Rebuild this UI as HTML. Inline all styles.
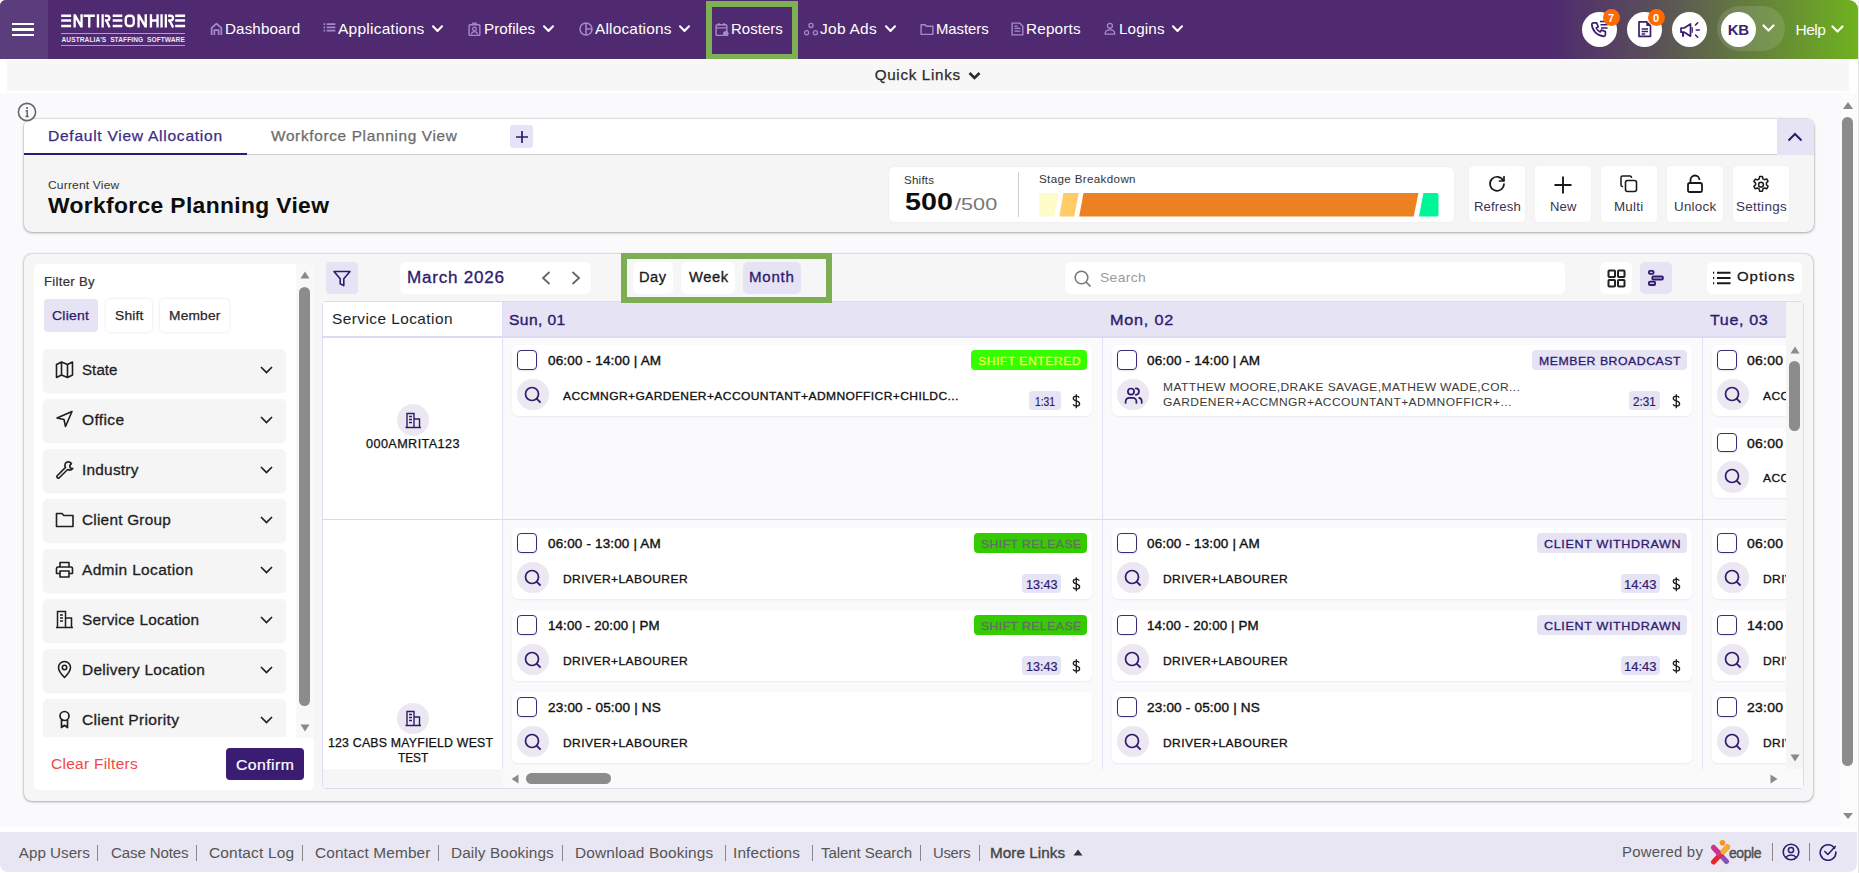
<!DOCTYPE html>
<html><head><meta charset="utf-8"><style>
*{margin:0;padding:0;box-sizing:border-box}
html,body{width:1859px;height:873px;overflow:hidden;background:#fff;font-family:"Liberation Sans",sans-serif}
.a{position:absolute}
.t{position:absolute;line-height:1;white-space:nowrap}
</style></head><body>
<div class="a" style="left:0px;top:0px;width:1858px;height:59px;background:linear-gradient(90deg,#4f2a70 0,#4f2a70 1550px,#5a5058 1655px,#6fb21f 1858px);border-top-right-radius:9px;border-top-left-radius:6px"></div>
<div class="a" style="left:0px;top:0px;width:48px;height:59px;background:#5b3c7c;border-top-left-radius:6px"></div>
<div class="a" style="left:12px;top:22.7px;width:22px;height:2.5px;background:#fff"></div>
<div class="a" style="left:12px;top:28.2px;width:22px;height:2.5px;background:#fff"></div>
<div class="a" style="left:12px;top:33.8px;width:22px;height:2.5px;background:#fff"></div>
<svg class="a" style="left:61px;top:14px;" width="126" height="14" viewBox="0 0 126 14" fill="none"><g stroke="#fff" stroke-width="2.35" fill="none"><path d="M0.2 1.7H10.1M0.2 6.45H10.1M0.2 12H10.1M13.65 13.4V0.3M20.55 13.4V0.3M13.65 0.6L20.55 13.1M22.6 1.7H33.9M28.25 1.7V13.4M36.95 0.3V13.4M41.65 0.3V13.4M43.90 1.7H46.00A2.375 2.375 0 0 1 46.00 6.45H43.90M45.50 6.45L48.55 13.4M51.7 1.7H61.3M51.7 6.45H61.3M51.7 12H61.3M89.95 0.3V13.4M96.55 0.3V13.4M89.95 6.45H96.55M77.55 13.4V0.3M84.75 13.4V0.3M77.55 0.6L84.75 13.1M100.55 0.3V13.4M104.85 0.3V13.4M107.10 1.7H109.60A2.375 2.375 0 0 1 109.60 6.45H107.10M108.70 6.45L112.15 13.4M114.2 1.7H124.1M114.2 6.45H124.1M114.2 12H124.1"/><rect x="64.75" y="1.7" width="8.00" height="10.3" rx="3"/></g></svg>
<div class="a" style="left:61px;top:33px;width:124px;height:1px;background:rgba(255,255,255,.55)"></div>
<div class="a" style="left:61px;top:45px;width:124px;height:1px;background:rgba(255,255,255,.55)"></div>
<div class="t " style="left:61.5px;top:36.6px;font-size:6.6px;color:#ece6f2;font-weight:bold;letter-spacing:0.07px;white-space:pre;">AUSTRALIA'S  STAFFING  SOFTWARE</div>
<svg class="a" style="left:210px;top:22px;" width="14" height="14" viewBox="0 0 13 13" fill="none"><path d="M1.5 12V5.5L6 1.5l4.5 4V12M4 12V7.5h4V12" stroke="#a58bc9" stroke-width="1.6" stroke-linejoin="round"/></svg>
<div class="t " style="left:225.2px;top:21.2px;font-size:15px;color:#fff;letter-spacing:0.11px;transform:scaleX(1.013);transform-origin:0 0;">Dashboard</div>
<svg class="a" style="left:322.7px;top:22px;" width="14" height="14" viewBox="0 0 13 13" fill="none"><path d="M0.5 2h1.5M0.5 5h1.5M0.5 8h1.5M3.5 2h8M3.5 5h8M3.5 8h8" stroke="#a58bc9" stroke-width="1.6"/></svg>
<div class="t " style="left:338.2px;top:21.2px;font-size:15px;color:#fff;letter-spacing:0.24px;transform:scaleX(1.034);transform-origin:0 0;">Applications</div>
<svg class="a" style="left:431.5px;top:25px;" width="11" height="8" viewBox="0 0 11 8" fill="none"><path d="M1 1.2l4.5 4.8L10 1.2" stroke="#fff" stroke-width="2" stroke-linecap="round" stroke-linejoin="round"/></svg>
<svg class="a" style="left:468.4px;top:22px;" width="14" height="14" viewBox="0 0 13 13" fill="none"><rect x="1" y="2.5" width="10" height="10" rx="1" stroke="#a58bc9" stroke-width="1.3"/><circle cx="6" cy="6.5" r="1.7" stroke="#a58bc9" stroke-width="1.2"/><path d="M3 11.5c.6-1.8 1.7-2.5 3-2.5s2.4.7 3 2.5M4.5 2.5V1h3v1.5" stroke="#a58bc9" stroke-width="1.2"/></svg>
<div class="t " style="left:484.0px;top:21.2px;font-size:15px;color:#fff;letter-spacing:0.08px;transform:scaleX(1.011);transform-origin:0 0;">Profiles</div>
<svg class="a" style="left:542.5px;top:25px;" width="11" height="8" viewBox="0 0 11 8" fill="none"><path d="M1 1.2l4.5 4.8L10 1.2" stroke="#fff" stroke-width="2" stroke-linecap="round" stroke-linejoin="round"/></svg>
<svg class="a" style="left:578.6px;top:22px;" width="14" height="14" viewBox="0 0 13 13" fill="none"><circle cx="6.5" cy="6.5" r="5.6" stroke="#a58bc9" stroke-width="1.4"/><path d="M6.5 1v11.2M6.5 6.5h5.6" stroke="#a58bc9" stroke-width="1.4"/></svg>
<div class="t " style="left:595.0px;top:21.2px;font-size:15px;color:#fff;letter-spacing:0.19px;transform:scaleX(1.027);transform-origin:0 0;">Allocations</div>
<svg class="a" style="left:679px;top:25px;" width="11" height="8" viewBox="0 0 11 8" fill="none"><path d="M1 1.2l4.5 4.8L10 1.2" stroke="#fff" stroke-width="2" stroke-linecap="round" stroke-linejoin="round"/></svg>
<svg class="a" style="left:715.4px;top:22px;" width="14" height="14" viewBox="0 0 13 13" fill="none"><rect x="1" y="2.5" width="10" height="10" rx="1.2" stroke="#a58bc9" stroke-width="1.3"/><path d="M1 5.5h10M3.5 1v2.5M8.5 1v2.5" stroke="#a58bc9" stroke-width="1.3"/><circle cx="10" cy="11" r="2.6" fill="#a58bc9"/></svg>
<div class="t " style="left:731.0px;top:21.2px;font-size:15px;color:#fff;letter-spacing:0.01px;">Rosters</div>
<svg class="a" style="left:804px;top:22px;" width="14" height="14" viewBox="0 0 13 13" fill="none"><circle cx="6.5" cy="3.2" r="1.9" stroke="#a58bc9" stroke-width="1.2"/><circle cx="2.4" cy="10" r="1.9" stroke="#a58bc9" stroke-width="1.2"/><circle cx="10.6" cy="10" r="1.9" stroke="#a58bc9" stroke-width="1.2"/></svg>
<div class="t " style="left:820.3px;top:21.2px;font-size:15px;color:#fff;letter-spacing:0.27px;transform:scaleX(1.031);transform-origin:0 0;">Job Ads</div>
<svg class="a" style="left:884.6px;top:25px;" width="11" height="8" viewBox="0 0 11 8" fill="none"><path d="M1 1.2l4.5 4.8L10 1.2" stroke="#fff" stroke-width="2" stroke-linecap="round" stroke-linejoin="round"/></svg>
<svg class="a" style="left:920px;top:22px;" width="14" height="14" viewBox="0 0 13 13" fill="none"><path d="M1 2.5h3.8l1.2 1.5h6v7.5H1z" stroke="#a58bc9" stroke-width="1.3" stroke-linejoin="round"/></svg>
<div class="t " style="left:936.4px;top:21.2px;font-size:15px;color:#fff;letter-spacing:-0.06px;transform:scaleX(0.993);transform-origin:0 0;">Masters</div>
<svg class="a" style="left:1011px;top:22px;" width="14" height="14" viewBox="0 0 13 13" fill="none"><path d="M1 1h7l3 3v8H1z" stroke="#a58bc9" stroke-width="1.3" stroke-linejoin="round"/><path d="M3.2 6h5.5M3.2 8.5h5.5M3.2 3.8h3" stroke="#a58bc9" stroke-width="1.2"/></svg>
<div class="t " style="left:1026.4px;top:21.2px;font-size:15px;color:#fff;letter-spacing:0.17px;transform:scaleX(1.020);transform-origin:0 0;">Reports</div>
<svg class="a" style="left:1104px;top:22px;" width="14" height="14" viewBox="0 0 13 13" fill="none"><circle cx="5.5" cy="3.5" r="2.3" stroke="#a58bc9" stroke-width="1.2"/><path d="M1 11.2c0-2.5 2-3.8 4.5-3.8s4.5 1.3 4.5 3.8z" stroke="#a58bc9" stroke-width="1.2" stroke-linejoin="round"/></svg>
<div class="t " style="left:1118.7px;top:21.2px;font-size:15px;color:#fff;letter-spacing:0.13px;transform:scaleX(1.015);transform-origin:0 0;">Logins</div>
<svg class="a" style="left:1171.6px;top:25px;" width="11" height="8" viewBox="0 0 11 8" fill="none"><path d="M1 1.2l4.5 4.8L10 1.2" stroke="#fff" stroke-width="2" stroke-linecap="round" stroke-linejoin="round"/></svg>
<div class="a" style="left:706px;top:1px;width:92px;height:59px;border:6px solid #7eb054"></div>
<div class="a" style="left:1582.0px;top:11.5px;width:35.0px;height:35.0px;background:#fff;border-radius:50%"></div>
<div class="a" style="left:1626.8px;top:11.5px;width:35.0px;height:35.0px;background:#fff;border-radius:50%"></div>
<div class="a" style="left:1671.9px;top:11.5px;width:35.0px;height:35.0px;background:#fff;border-radius:50%"></div>
<svg class="a" style="left:1587px;top:17px;" width="24" height="24" viewBox="0 0 24 24" fill="none"><g transform="translate(2.4 2.6) scale(.8)"><path d="M5 4h4l2 5l-2.5 1.5a11 11 0 0 0 5 5l1.5-2.5l5 2v4a2 2 0 0 1-2 2a16 16 0 0 1-15-15a2 2 0 0 1 2-2" stroke="#3a1d6e" stroke-width="2.1" stroke-linejoin="round"/></g><path d="M13 4.5h7.5M13.5 7.8h7M14 11h6.5" stroke="#3a1d6e" stroke-width="1.6"/></svg>
<svg class="a" style="left:1635px;top:19px;" width="20" height="20" viewBox="0 0 20 20" fill="none"><path d="M4 2.8h7.5l4 4v10.5H4z" stroke="#3a1d6e" stroke-width="1.7" stroke-linejoin="round"/><path d="M11.3 2.8v4.2h4.2z" fill="#3a1d6e"/><path d="M6.6 10.1h6.4M6.6 12.5h6.4M6.6 14.9h3.6" stroke="#3a1d6e" stroke-width="1.5"/></svg>
<svg class="a" style="left:1679px;top:19px;" width="22" height="20" viewBox="0 0 22 20" fill="none"><path d="M2 9h3.2l6.3-4v12.2L5.2 13.2H2z" stroke="#3a1d6e" stroke-width="1.7" stroke-linejoin="round"/><path d="M4 13.5v4.2" stroke="#3a1d6e" stroke-width="2"/><path d="M13.2 8.3v5.5" stroke="#3a1d6e" stroke-width="1.3"/><path d="M16.5 6l2.2-2.2M17.3 11h3M16.5 16l2.2 2.2" stroke="#3a1d6e" stroke-width="1.6" stroke-linecap="round"/></svg>
<div class="a" style="left:1603.0px;top:9px;width:17.0px;height:17px;background:#ff6a00;border-radius:50%"></div>
<div class="t " style="left:1607.9px;top:12.7px;font-size:11px;color:#fff;font-weight:bold;">7</div>
<div class="a" style="left:1648.0px;top:9px;width:17.0px;height:17px;background:#ff6a00;border-radius:50%"></div>
<div class="t " style="left:1652.9px;top:12.7px;font-size:11px;color:#fff;font-weight:bold;">0</div>
<div class="a" style="left:1717px;top:6px;width:68px;height:45px;background:rgba(255,255,255,.12);border-radius:23px"></div>
<div class="a" style="left:1721px;top:11.5px;width:35px;height:35.0px;background:#fff;border-radius:50%"></div>
<div class="t " style="left:1727.7px;top:22.2px;font-size:15px;color:#3b2470;font-weight:bold;letter-spacing:-0.18px;">KB</div>
<svg class="a" style="left:1762px;top:24px;" width="13" height="9" viewBox="0 0 13 9" fill="none"><path d="M1.5 1.5l5 5 5-5" stroke="#fff" stroke-width="2.2" stroke-linecap="round" stroke-linejoin="round"/></svg>
<div class="t " style="left:1795.5px;top:22.3px;font-size:15.5px;color:#fff;letter-spacing:-0.52px;font-family:'Liberation Sans';">Help</div>
<svg class="a" style="left:1831px;top:25px;" width="13" height="9" viewBox="0 0 13 9" fill="none"><path d="M1.5 1.5l5 5 5-5" stroke="#fff" stroke-width="2.2" stroke-linecap="round" stroke-linejoin="round"/></svg>
<div class="a" style="left:1841px;top:59px;width:18px;height:814px;background:#fcfcfc"></div>
<div class="a" style="left:1858px;top:0px;width:1px;height:873px;background:#e4e4e4"></div>
<div class="a" style="left:0px;top:59px;width:1858px;height:34px;background:#fff"></div>
<div class="a" style="left:7px;top:59.8px;width:1842px;height:31.0px;background:#f7f7f7"></div>
<div class="t " style="left:874.7px;top:66.9px;font-size:15.2px;color:#2a2a2a;letter-spacing:0.69px;-webkit-text-stroke:.25px #2a2a2a;">Quick Links</div>
<svg class="a" style="left:968px;top:71px;" width="13" height="10" viewBox="0 0 13 10" fill="none"><path d="M1.5 2l5 5 5-5" stroke="#2a2a2a" stroke-width="2.6" stroke-linejoin="miter"/></svg>
<div class="a" style="left:0px;top:93px;width:1841px;height:734px;background:#fafafc"></div>
<svg class="a" style="left:1842px;top:101px;" width="12" height="9" viewBox="0 0 12 9" fill="none"><path d="M1 8h10L6 1z" fill="#8a8a8a"/></svg>
<div class="a" style="left:1842px;top:117px;width:11px;height:649px;background:#8c8c8c;border-radius:6px"></div>
<svg class="a" style="left:1842px;top:812px;" width="12" height="8" viewBox="0 0 12 8" fill="none"><path d="M1 1h10L6 7z" fill="#8a8a8a"/></svg>
<div class="a" style="left:23.5px;top:118.5px;width:1790.0px;height:113.5px;background:#f5f5f5;border-radius:8px;box-shadow:0 0 2px rgba(0,0,0,.3),0 1px 3px rgba(0,0,0,.25)"></div>
<div class="a" style="left:23.5px;top:118.5px;width:1790.0px;height:36.5px;background:#fff;border-top-left-radius:8px;border-top-right-radius:8px;border-bottom:1px solid #cfcfcf"></div>
<div class="a" style="left:23.5px;top:153px;width:223.0px;height:2px;background:#2d1b6b"></div>
<div class="t " style="left:48.2px;top:128.7px;font-size:14.5px;color:#3d2b85;letter-spacing:0.68px;transform:scaleX(1.073);transform-origin:0 0;-webkit-text-stroke:.25px #3d2b85;">Default View Allocation</div>
<div class="t " style="left:271.2px;top:128.7px;font-size:14.5px;color:#6b6b6b;letter-spacing:0.63px;transform:scaleX(1.060);transform-origin:0 0;-webkit-text-stroke:.25px #6b6b6b;">Workforce Planning View</div>
<div class="a" style="left:510.3px;top:125px;width:23.19999999999999px;height:23.30000000000001px;background:#e6e3f7;border-radius:3px"></div>
<svg class="a" style="left:515px;top:130px;" width="14" height="14" viewBox="0 0 14 14" fill="none"><path d="M7 1v12M1 7h12" stroke="#2d1b6b" stroke-width="1.7"/></svg>
<div class="a" style="left:1777px;top:119px;width:36.5px;height:36px;background:#e6e3f5;border-top-right-radius:8px"></div>
<svg class="a" style="left:1787px;top:131px;" width="16" height="12" viewBox="0 0 16 12" fill="none"><path d="M1.5 9.5L8 3l6.5 6.5" stroke="#2d1b6b" stroke-width="2"/></svg>
<div class="t " style="left:48.2px;top:179.4px;font-size:11.7px;color:#333;letter-spacing:0.17px;transform:scaleX(1.029);transform-origin:0 0;">Current View</div>
<div class="t " style="left:48.2px;top:195.1px;font-size:22.2px;color:#0d0d0d;font-weight:bold;letter-spacing:0.34px;transform:scaleX(1.029);transform-origin:0 0;">Workforce Planning View</div>
<div class="a" style="left:889px;top:167px;width:565px;height:55px;background:#fff;border-radius:5px;box-shadow:0 0 2px rgba(0,0,0,.08)"></div>
<div class="t " style="left:904.3px;top:175.4px;font-size:11.2px;color:#333;letter-spacing:0.20px;transform:scaleX(1.038);transform-origin:0 0;">Shifts</div>
<div class="t " style="left:904.9px;top:190.4px;font-size:24.3px;color:#0d0d0d;font-weight:bold;transform:scaleX(1.180);transform-origin:0 0;">500</div>
<div class="t " style="left:955.0px;top:196.3px;font-size:17.4px;color:#777;transform:scaleX(1.247);transform-origin:0 0;">/500</div>
<div class="a" style="left:1018px;top:171.8px;width:1px;height:45.0px;background:#d0d0d0"></div>
<div class="t " style="left:1039.2px;top:173.7px;font-size:11px;color:#333;letter-spacing:0.33px;transform:scaleX(1.056);transform-origin:0 0;">Stage Breakdown</div>
<svg class="a" style="left:1038px;top:192px;" width="402" height="26" viewBox="0 0 402 26" fill="none"><path d="M3.2 1H20.7L16.6 24.6H3.2a2 2 0 0 1-2-2V3a2 2 0 0 1 2-2z" fill="#fffccb"/><path d="M25.4 1H40.8L36.2 24.6H21.3z" fill="#ffcc66"/><path d="M45.5 1H380.5L375.7 24.6H41.2z" fill="#ec8122"/><path d="M385.4 1H398.5a2 2 0 0 1 2 2V22.6a2 2 0 0 1-2 2H381z" fill="#00f598"/></svg>
<div class="a" style="left:1469px;top:166px;width:56px;height:56px;background:#fff;border-radius:4px;box-shadow:0 0 2px rgba(0,0,0,.06)"></div>
<div class="t " style="left:1473.6px;top:200.5px;font-size:12.9px;color:#3a3450;letter-spacing:0.14px;transform:scaleX(1.018);transform-origin:0 0;">Refresh</div>
<div class="a" style="left:1535px;top:166px;width:56px;height:56px;background:#fff;border-radius:4px;box-shadow:0 0 2px rgba(0,0,0,.06)"></div>
<div class="t " style="left:1549.8px;top:200.5px;font-size:12.9px;color:#3a3450;letter-spacing:0.13px;transform:scaleX(1.010);transform-origin:0 0;">New</div>
<div class="a" style="left:1601px;top:166px;width:56px;height:56px;background:#fff;border-radius:4px;box-shadow:0 0 2px rgba(0,0,0,.06)"></div>
<div class="t " style="left:1614.4px;top:200.5px;font-size:12.9px;color:#3a3450;letter-spacing:0.24px;transform:scaleX(1.036);transform-origin:0 0;">Multi</div>
<div class="a" style="left:1667px;top:166px;width:56px;height:56px;background:#fff;border-radius:4px;box-shadow:0 0 2px rgba(0,0,0,.06)"></div>
<div class="t " style="left:1673.9px;top:200.5px;font-size:12.9px;color:#3a3450;letter-spacing:0.26px;transform:scaleX(1.035);transform-origin:0 0;">Unlock</div>
<div class="a" style="left:1733px;top:166px;width:56px;height:56px;background:#fff;border-radius:4px;box-shadow:0 0 2px rgba(0,0,0,.06)"></div>
<div class="t " style="left:1735.7px;top:200.5px;font-size:12.9px;color:#3a3450;letter-spacing:0.28px;transform:scaleX(1.044);transform-origin:0 0;">Settings</div>
<svg class="a" style="left:1487px;top:174px;" width="20" height="20" viewBox="0 0 20 20" fill="none"><path d="M16.2 6.5A7 7 0 1 0 17 10" stroke="#1a1a1a" stroke-width="1.7" stroke-linecap="round"/><path d="M17 2.5v4.5h-4.5" stroke="#1a1a1a" stroke-width="1.7" stroke-linecap="round" stroke-linejoin="round"/></svg>
<svg class="a" style="left:1553px;top:175px;" width="20" height="20" viewBox="0 0 20 20" fill="none"><path d="M10 1.5v17M1.5 10h17" stroke="#1a1a1a" stroke-width="1.9"/></svg>
<svg class="a" style="left:1619px;top:174px;" width="20" height="20" viewBox="0 0 20 20" fill="none"><path d="M4 12.5H3.5a1.5 1.5 0 0 1-1.5-1.5V3.5A1.5 1.5 0 0 1 3.5 2H11a1.5 1.5 0 0 1 1.5 1.5V4" stroke="#1a1a1a" stroke-width="1.5"/><rect x="6.5" y="6.5" width="11" height="11" rx="2" stroke="#1a1a1a" stroke-width="1.6"/></svg>
<svg class="a" style="left:1685px;top:174px;" width="20" height="20" viewBox="0 0 20 20" fill="none"><path d="M5.5 9V6a4.5 4.5 0 0 1 9 0" stroke="#1a1a1a" stroke-width="1.8"/><rect x="3" y="9" width="14" height="9" rx="1.8" stroke="#1a1a1a" stroke-width="1.8"/></svg>
<svg class="a" style="left:1751px;top:175px;" width="20" height="20" viewBox="0 0 20 20" fill="none"><path d="M8.6 1.5h2.8l.5 2.3 1.6.9 2.2-.8 1.4 2.4-1.7 1.6v1.9l1.7 1.6-1.4 2.4-2.2-.8-1.6.9-.5 2.3H8.6l-.5-2.3-1.6-.9-2.2.8-1.4-2.4 1.7-1.6V8.1L2.9 6.5l1.4-2.4 2.2.8 1.6-.9z" stroke="#1a1a1a" stroke-width="1.5" stroke-linejoin="round"/><circle cx="10" cy="9.7" r="2.4" stroke="#1a1a1a" stroke-width="1.5"/></svg>
<svg class="a" style="left:17px;top:102px;" width="20" height="20" viewBox="0 0 20 20" fill="none"><circle cx="10" cy="10" r="8.6" fill="#fafafc" stroke="#666" stroke-width="1.6"/><path d="M8.6 8.8h1.6v5.6M8.4 14.5h3.4" stroke="#666" stroke-width="1.5"/><circle cx="10" cy="6" r="1.1" fill="#666"/></svg>
<div class="a" style="left:23.5px;top:253.5px;width:1789.8px;height:547.0px;background:#f6f6f6;border-radius:8px;box-shadow:0 0 2px rgba(0,0,0,.3),0 1px 3px rgba(0,0,0,.25)"></div>
<div class="a" style="left:34px;top:264px;width:280px;height:526px;background:#fff;border-radius:5px"></div>
<div class="a" style="left:295.5px;top:264px;width:18.5px;height:474px;background:#f8f8f8"></div>
<svg class="a" style="left:299.5px;top:271px;" width="10" height="8" viewBox="0 0 10 8" fill="none"><path d="M0.5 7.5h9L5 0.5z" fill="#8a8a8a"/></svg>
<div class="a" style="left:299px;top:286.5px;width:11px;height:419.5px;background:#8c8c8c;border-radius:6px"></div>
<svg class="a" style="left:299.5px;top:724px;" width="10" height="8" viewBox="0 0 10 8" fill="none"><path d="M0.5 0.5h9L5 7.5z" fill="#8a8a8a"/></svg>
<div class="t " style="left:44.3px;top:275.5px;font-size:12.6px;color:#333;letter-spacing:0.26px;transform:scaleX(1.048);transform-origin:0 0;-webkit-text-stroke:.2px #333;">Filter By</div>
<div class="a" style="left:44.3px;top:299.2px;width:53.60000000000001px;height:33.30000000000001px;border-radius:4px;background:#e6e3f5"></div>
<div class="t " style="left:52.3px;top:309.0px;font-size:13.5px;color:#2e1a6e;letter-spacing:0.23px;transform:scaleX(1.035);transform-origin:0 0;-webkit-text-stroke:.25px #2e1a6e;">Client</div>
<div class="a" style="left:105.9px;top:299.2px;width:46.099999999999994px;height:33.30000000000001px;border-radius:4px;background:#fff;box-shadow:0 0 3px rgba(0,0,0,.12)"></div>
<div class="t " style="left:114.8px;top:309.0px;font-size:13.5px;color:#2a2a2a;letter-spacing:0.17px;transform:scaleX(1.026);transform-origin:0 0;-webkit-text-stroke:.25px #2a2a2a;">Shift</div>
<div class="a" style="left:160px;top:299.2px;width:69px;height:33.30000000000001px;border-radius:4px;background:#fff;box-shadow:0 0 3px rgba(0,0,0,.12)"></div>
<div class="t " style="left:168.6px;top:309.0px;font-size:13.5px;color:#2a2a2a;letter-spacing:0.18px;transform:scaleX(1.019);transform-origin:0 0;-webkit-text-stroke:.25px #2a2a2a;">Member</div>
<div class="a" style="left:43.3px;top:348.9px;width:242.5px;height:42.69999999999999px;background:#f5f5f5;border-radius:5px;box-shadow:0 1px 2px rgba(0,0,0,.06);"></div>
<svg class="a" style="left:55px;top:360.4px;" width="19" height="19" viewBox="0 0 19 19" fill="none"><path d="M1.5 4.5l5-2.5 6 2.5 5-2.5v13l-5 2.5-6-2.5-5 2.5z M6.5 2v13 M12.5 4.5v13" stroke="#1f1f1f" stroke-width="1.6" stroke-linejoin="round"/></svg>
<div class="t " style="left:82.3px;top:362.8px;font-size:14.9px;color:#1f1f1f;letter-spacing:0.09px;transform:scaleX(1.010);transform-origin:0 0;-webkit-text-stroke:.3px #1f1f1f;">State</div>
<svg class="a" style="left:260px;top:365.9px;" width="13" height="8" viewBox="0 0 13 8" fill="none"><path d="M1 1l5.5 5.5L12 1" stroke="#1f1f1f" stroke-width="1.7"/></svg>
<div class="a" style="left:43.3px;top:398.9px;width:242.5px;height:42.69999999999999px;background:#f5f5f5;border-radius:5px;box-shadow:0 1px 2px rgba(0,0,0,.06);"></div>
<svg class="a" style="left:55px;top:410.4px;" width="19" height="19" viewBox="0 0 19 19" fill="none"><path d="M17 1.5L2 8l7 1.5 1.5 7z" stroke="#1f1f1f" stroke-width="1.6" stroke-linejoin="round"/></svg>
<div class="t " style="left:82.3px;top:412.8px;font-size:14.9px;color:#1f1f1f;letter-spacing:0.33px;transform:scaleX(1.044);transform-origin:0 0;-webkit-text-stroke:.3px #1f1f1f;">Office</div>
<svg class="a" style="left:260px;top:415.9px;" width="13" height="8" viewBox="0 0 13 8" fill="none"><path d="M1 1l5.5 5.5L12 1" stroke="#1f1f1f" stroke-width="1.7"/></svg>
<div class="a" style="left:43.3px;top:448.9px;width:242.5px;height:42.69999999999999px;background:#f5f5f5;border-radius:5px;box-shadow:0 1px 2px rgba(0,0,0,.06);"></div>
<svg class="a" style="left:55px;top:460.4px;" width="19" height="19" viewBox="0 0 19 19" fill="none"><path d="M11.5 2.2a4.2 4.2 0 0 0-1 5.2L2.2 15.7a1.5 1.5 0 0 0 2.1 2.1l8.3-8.3a4.2 4.2 0 0 0 5.2-1l-2.5-.5-.6-2.5 1.7-1.9a4.2 4.2 0 0 0-4.9-1.4z" stroke="#1f1f1f" stroke-width="1.6" stroke-linejoin="round"/></svg>
<div class="t " style="left:82.3px;top:462.8px;font-size:14.9px;color:#1f1f1f;letter-spacing:0.24px;transform:scaleX(1.032);transform-origin:0 0;-webkit-text-stroke:.3px #1f1f1f;">Industry</div>
<svg class="a" style="left:260px;top:465.9px;" width="13" height="8" viewBox="0 0 13 8" fill="none"><path d="M1 1l5.5 5.5L12 1" stroke="#1f1f1f" stroke-width="1.7"/></svg>
<div class="a" style="left:43.3px;top:498.9px;width:242.5px;height:42.700000000000045px;background:#f5f5f5;border-radius:5px;box-shadow:0 1px 2px rgba(0,0,0,.06);"></div>
<svg class="a" style="left:55px;top:510.4px;" width="19" height="19" viewBox="0 0 19 19" fill="none"><path d="M1.5 3.5h5.5l1.8 2h9.2v11H1.5z" stroke="#1f1f1f" stroke-width="1.6" stroke-linejoin="round"/></svg>
<div class="t " style="left:82.3px;top:512.8px;font-size:14.9px;color:#1f1f1f;letter-spacing:0.23px;transform:scaleX(1.031);transform-origin:0 0;-webkit-text-stroke:.3px #1f1f1f;">Client Group</div>
<svg class="a" style="left:260px;top:515.9px;" width="13" height="8" viewBox="0 0 13 8" fill="none"><path d="M1 1l5.5 5.5L12 1" stroke="#1f1f1f" stroke-width="1.7"/></svg>
<div class="a" style="left:43.3px;top:548.9px;width:242.5px;height:42.700000000000045px;background:#f5f5f5;border-radius:5px;box-shadow:0 1px 2px rgba(0,0,0,.06);"></div>
<svg class="a" style="left:55px;top:560.4px;" width="19" height="19" viewBox="0 0 19 19" fill="none"><path d="M5 7V2.5h9V7M3 7h13a1.5 1.5 0 0 1 1.5 1.5v5H14M5 13.5H1.5v-5A1.5 1.5 0 0 1 3 7M5 11h9v6H5z" stroke="#1f1f1f" stroke-width="1.6" stroke-linejoin="round"/></svg>
<div class="t " style="left:82.3px;top:562.8px;font-size:14.9px;color:#1f1f1f;letter-spacing:0.31px;transform:scaleX(1.041);transform-origin:0 0;-webkit-text-stroke:.3px #1f1f1f;">Admin Location</div>
<svg class="a" style="left:260px;top:565.9px;" width="13" height="8" viewBox="0 0 13 8" fill="none"><path d="M1 1l5.5 5.5L12 1" stroke="#1f1f1f" stroke-width="1.7"/></svg>
<div class="a" style="left:43.3px;top:598.9px;width:242.5px;height:42.700000000000045px;background:#f5f5f5;border-radius:5px;box-shadow:0 1px 2px rgba(0,0,0,.06);"></div>
<svg class="a" style="left:55px;top:610.4px;" width="19" height="19" viewBox="0 0 19 19" fill="none"><path d="M2.5 17.5V1.5h8v16M10.5 8h6v9.5M1 17.5h17M5 5h3M5 8h3M5 11h3" stroke="#1f1f1f" stroke-width="1.5"/></svg>
<div class="t " style="left:82.3px;top:612.8px;font-size:14.9px;color:#1f1f1f;letter-spacing:0.23px;transform:scaleX(1.032);transform-origin:0 0;-webkit-text-stroke:.3px #1f1f1f;">Service Location</div>
<svg class="a" style="left:260px;top:615.9px;" width="13" height="8" viewBox="0 0 13 8" fill="none"><path d="M1 1l5.5 5.5L12 1" stroke="#1f1f1f" stroke-width="1.7"/></svg>
<div class="a" style="left:43.3px;top:648.9px;width:242.5px;height:42.700000000000045px;background:#f5f5f5;border-radius:5px;box-shadow:0 1px 2px rgba(0,0,0,.06);"></div>
<svg class="a" style="left:55px;top:660.4px;" width="19" height="19" viewBox="0 0 19 19" fill="none"><path d="M9.5 17.5c-3-3-6-6.5-6-10a6 6 0 0 1 12 0c0 3.5-3 7-6 10z" stroke="#1f1f1f" stroke-width="1.6" stroke-linejoin="round"/><circle cx="9.5" cy="7.5" r="2.2" stroke="#1f1f1f" stroke-width="1.6"/></svg>
<div class="t " style="left:82.3px;top:662.8px;font-size:14.9px;color:#1f1f1f;letter-spacing:0.26px;transform:scaleX(1.037);transform-origin:0 0;-webkit-text-stroke:.3px #1f1f1f;">Delivery Location</div>
<svg class="a" style="left:260px;top:665.9px;" width="13" height="8" viewBox="0 0 13 8" fill="none"><path d="M1 1l5.5 5.5L12 1" stroke="#1f1f1f" stroke-width="1.7"/></svg>
<div class="a" style="left:43.3px;top:698.9px;width:242.5px;height:38.60000000000002px;background:#f5f5f5;border-radius:5px;box-shadow:0 1px 2px rgba(0,0,0,.06);border-bottom-left-radius:0;border-bottom-right-radius:0;box-shadow:none;"></div>
<svg class="a" style="left:55px;top:710.4px;" width="19" height="19" viewBox="0 0 19 19" fill="none"><circle cx="9.5" cy="6" r="4.5" stroke="#1f1f1f" stroke-width="1.7"/><path d="M6.5 10v7.5l3-2.2 3 2.2V10" stroke="#1f1f1f" stroke-width="1.7" stroke-linejoin="round"/></svg>
<div class="t " style="left:82.3px;top:712.8px;font-size:14.9px;color:#1f1f1f;letter-spacing:0.29px;transform:scaleX(1.048);transform-origin:0 0;-webkit-text-stroke:.3px #1f1f1f;">Client Priority</div>
<svg class="a" style="left:260px;top:715.9px;" width="13" height="8" viewBox="0 0 13 8" fill="none"><path d="M1 1l5.5 5.5L12 1" stroke="#1f1f1f" stroke-width="1.7"/></svg>
<div class="t " style="left:50.6px;top:756.8px;font-size:14.9px;color:#f04848;letter-spacing:0.26px;transform:scaleX(1.040);transform-origin:0 0;">Clear Filters</div>
<div class="a" style="left:226px;top:748px;width:77.80000000000001px;height:31.799999999999955px;background:#3b1c73;border-radius:4px"></div>
<div class="t " style="left:235.6px;top:756.9px;font-size:15px;color:#fff;letter-spacing:0.43px;transform:scaleX(1.051);transform-origin:0 0;-webkit-text-stroke:.2px #fff;">Confirm</div>
<div class="a" style="left:326px;top:262px;width:32px;height:31.600000000000023px;background:#e6e3f5;border-radius:4px"></div>
<svg class="a" style="left:333px;top:269.5px;" width="18" height="17" viewBox="0 0 18 17" fill="none"><path d="M1 1.5h16l-6.2 7.3v6.8l-3.6-1.8v-5z" stroke="#2e1a6e" stroke-width="1.6" stroke-linejoin="round"/></svg>
<div class="a" style="left:400px;top:262px;width:190.60000000000002px;height:31.600000000000023px;background:#fff;border-radius:6px"></div>
<div class="t " style="left:406.5px;top:269.6px;font-size:15.8px;color:#2e1a6e;letter-spacing:0.70px;transform:scaleX(1.081);transform-origin:0 0;-webkit-text-stroke:.3px #2e1a6e;">March 2026</div>
<svg class="a" style="left:541px;top:271px;" width="10" height="14" viewBox="0 0 10 14" fill="none"><path d="M8.5 1L2 7l6.5 6" stroke="#666" stroke-width="1.8"/></svg>
<svg class="a" style="left:571px;top:271px;" width="10" height="14" viewBox="0 0 10 14" fill="none"><path d="M1.5 1L8 7l-6.5 6" stroke="#666" stroke-width="1.8"/></svg>
<div class="a" style="left:633px;top:261.8px;width:40px;height:32.0px;border-radius:5px;background:#fff"></div>
<div class="t " style="left:639.4px;top:269.9px;font-size:14px;color:#1a1a1a;letter-spacing:0.52px;transform:scaleX(1.044);transform-origin:0 0;-webkit-text-stroke:.3px #1a1a1a;">Day</div>
<div class="a" style="left:681px;top:261.8px;width:53.799999999999955px;height:32.0px;border-radius:5px;background:#fff"></div>
<div class="t " style="left:688.8px;top:269.9px;font-size:14px;color:#1a1a1a;letter-spacing:0.58px;transform:scaleX(1.052);transform-origin:0 0;-webkit-text-stroke:.3px #1a1a1a;">Week</div>
<div class="a" style="left:743px;top:261.8px;width:57.799999999999955px;height:32.0px;border-radius:5px;background:#e6e3f5"></div>
<div class="t " style="left:749.4px;top:269.9px;font-size:14px;color:#2e1a6e;letter-spacing:0.70px;transform:scaleX(1.078);transform-origin:0 0;-webkit-text-stroke:.3px #2e1a6e;">Month</div>
<div class="a" style="left:1065px;top:262px;width:500px;height:31.69999999999999px;background:#fff;border-radius:6px"></div>
<svg class="a" style="left:1074px;top:269.5px;" width="18" height="18" viewBox="0 0 18 18" fill="none"><circle cx="7.5" cy="7.5" r="6.3" stroke="#777" stroke-width="1.6"/><path d="M12 12l4.5 4.5" stroke="#777" stroke-width="1.7"/></svg>
<div class="t " style="left:1100.4px;top:271.4px;font-size:13.3px;color:#9a9a9a;letter-spacing:0.35px;transform:scaleX(1.043);transform-origin:0 0;">Search</div>
<div class="a" style="left:1600.4px;top:262.3px;width:31.199999999999818px;height:31.30000000000001px;background:#fff;border-radius:5px"></div>
<svg class="a" style="left:1606.5px;top:269px;" width="19" height="19" viewBox="0 0 19 19" fill="none"><rect x="1.5" y="1.5" width="6.5" height="6.5" rx=".8" stroke="#222" stroke-width="2"/><rect x="11" y="1.5" width="6.5" height="6.5" rx=".8" stroke="#222" stroke-width="2"/><rect x="1.5" y="11" width="6.5" height="6.5" rx=".8" stroke="#222" stroke-width="2"/><rect x="11" y="11" width="6.5" height="6.5" rx=".8" stroke="#222" stroke-width="2"/></svg>
<div class="a" style="left:1640.3px;top:262.3px;width:31.5px;height:31.30000000000001px;background:#e6e3f5;border-radius:5px"></div>
<svg class="a" style="left:1647px;top:269px;" width="18" height="18" viewBox="0 0 18 18" fill="none"><rect x="1.9" y="1.9" width="4.7" height="3" rx="1.1" fill="#c9c1e6" stroke="#2e1a6e" stroke-width="1.8"/><rect x="5.3" y="7.3" width="10.6" height="3.3" rx="1.1" fill="#9b8fc8" stroke="#2e1a6e" stroke-width="1.8"/><rect x="1.9" y="12.7" width="6.2" height="3.3" rx="1.1" fill="#c9c1e6" stroke="#2e1a6e" stroke-width="1.8"/></svg>
<div class="a" style="left:1707px;top:262.3px;width:94.79999999999995px;height:31.599999999999966px;background:#fff;border-radius:6px"></div>
<svg class="a" style="left:1712px;top:271px;" width="20" height="14" viewBox="0 0 20 14" fill="none"><path d="M1 1.8h1.2M1 7h1.2M1 12.2h1.2M5 1.8h13.5M5 7h13.5M5 12.2h13.5" stroke="#1a1a1a" stroke-width="1.9"/></svg>
<div class="t " style="left:1737.2px;top:270.4px;font-size:13.3px;color:#1a1a1a;letter-spacing:0.86px;transform:scaleX(1.126);transform-origin:0 0;-webkit-text-stroke:.3px #1a1a1a;">Options</div>
<div class="a" style="left:322.3px;top:301.3px;width:1482.0px;height:487.49999999999994px;background:#f5f5f5;border:1px solid #dedaf2;border-radius:4px"></div>
<div class="a" style="left:323px;top:302px;width:179.5px;height:35.5px;background:#fff"></div>
<div class="a" style="left:502.5px;top:302px;width:1283.3px;height:35.69999999999999px;background:#e6e3f5"></div>
<div class="a" style="left:323px;top:337.5px;width:179.5px;height:431.29999999999995px;background:#fff"></div>
<div class="a" style="left:502.5px;top:337.7px;width:1283.3px;height:431.09999999999997px;background:#fafafd"></div>
<div class="a" style="left:323px;top:335.8px;width:1462.8px;height:1.8999999999999773px;background:#dedaf3"></div>
<div class="a" style="left:323px;top:519.2px;width:1462.8px;height:1.0px;background:#dcd8f0"></div>
<div class="a" style="left:502px;top:337.7px;width:1px;height:431.09999999999997px;background:#e3dff4"></div>
<div class="a" style="left:1102px;top:337.7px;width:1px;height:431.09999999999997px;background:#e3dff4"></div>
<div class="a" style="left:1702px;top:337.7px;width:1px;height:431.09999999999997px;background:#e3dff4"></div>
<div class="a" style="left:502px;top:302px;width:1px;height:35.69999999999999px;background:#e3dff4"></div>
<div class="t " style="left:332.4px;top:311.9px;font-size:14.5px;color:#1e1e1e;letter-spacing:0.42px;transform:scaleX(1.062);transform-origin:0 0;">Service Location</div>
<div class="t " style="left:508.6px;top:312.6px;font-size:14.9px;color:#2e1a6e;letter-spacing:0.39px;transform:scaleX(1.047);transform-origin:0 0;-webkit-text-stroke:.35px #2e1a6e;">Sun, 01</div>
<div class="t " style="left:1109.8px;top:312.6px;font-size:14.9px;color:#2e1a6e;letter-spacing:0.72px;transform:scaleX(1.087);transform-origin:0 0;-webkit-text-stroke:.35px #2e1a6e;">Mon, 02</div>
<div class="t " style="left:1710.0px;top:312.6px;font-size:14.9px;color:#2e1a6e;letter-spacing:0.60px;transform:scaleX(1.077);transform-origin:0 0;-webkit-text-stroke:.35px #2e1a6e;">Tue, 03</div>
<div class="a" style="left:397px;top:404px;width:32px;height:32px;background:#ebe8f1;border-radius:50%"></div>
<svg class="a" style="left:405px;top:411.5px;" width="17" height="17" viewBox="0 0 17 17" fill="none"><path d="M2 15.5V1.5h7v14M9 7h5.5v8.5M0.5 15.5h15.5M4 4.5h3M4 7.5h3M4 10.5h3" stroke="#2e1a6e" stroke-width="1.4"/></svg>
<div class="t " style="left:365.8px;top:437.8px;font-size:12px;color:#111;letter-spacing:0.39px;transform:scaleX(1.053);transform-origin:0 0;-webkit-text-stroke:.25px #111;">000AMRITA123</div>
<div class="a" style="left:397px;top:702.8px;width:32px;height:31.600000000000023px;background:#ebe8f1;border-radius:50%"></div>
<svg class="a" style="left:405px;top:710px;" width="17" height="17" viewBox="0 0 17 17" fill="none"><path d="M2 15.5V1.5h7v14M9 7h5.5v8.5M0.5 15.5h15.5M4 4.5h3M4 7.5h3M4 10.5h3" stroke="#2e1a6e" stroke-width="1.4"/></svg>
<div class="t " style="left:327.9px;top:737.3px;font-size:12px;color:#111;letter-spacing:0.20px;transform:scaleX(1.027);transform-origin:0 0;-webkit-text-stroke:.25px #111;">123 CABS MAYFIELD WEST</div>
<div class="t " style="left:397.7px;top:752.1px;font-size:12px;color:#111;letter-spacing:-0.06px;transform:scaleX(0.994);transform-origin:0 0;-webkit-text-stroke:.25px #111;">TEST</div>
<div class="a" style="left:512.3px;top:345px;width:579.8px;height:70.69999999999999px;background:#fff;border-radius:6px;box-shadow:0 1px 2px rgba(40,30,90,.07)"></div>
<div class="a" style="left:517.3px;top:350px;width:19.799999999999955px;height:19.80000000000001px;border:1.6px solid #3b2a7a;border-radius:4px;box-shadow:0 1px 2px rgba(0,0,0,.1)"></div>
<div class="t " style="left:547.5px;top:355.0px;font-size:12.1px;color:#111;letter-spacing:0.15px;transform:scaleX(1.118);transform-origin:0 0;-webkit-text-stroke:.35px #111;">06:00 - 14:00 | AM</div>
<div class="a" style="left:517.3px;top:378.8px;width:31.600000000000023px;height:31.599999999999966px;background:#ebe8f1;border-radius:50%"></div>
<svg class="a" style="left:523.8px;top:385.5px;" width="19" height="19" viewBox="0 0 19 19" fill="none"><circle cx="8" cy="8" r="6.5" stroke="#2e1a6e" stroke-width="1.7"/><path d="M12.6 12.6l4 4" stroke="#2e1a6e" stroke-width="1.8"/></svg>
<div class="t " style="left:562.9px;top:390.9px;font-size:11.45px;color:#111;letter-spacing:0.38px;transform:scaleX(1.053);transform-origin:0 0;-webkit-text-stroke:.3px #111;">ACCMNGR+GARDENER+ACCOUNTANT+ADMNOFFICR+CHILDC...</div>
<div class="a" style="left:971.0999999999999px;top:350px;width:116.0px;height:19.80000000000001px;background:#33ff00;border-radius:4px;"></div>
<div class="t " style="left:977.7px;top:354.7px;font-size:11.6px;color:#eeff55;letter-spacing:0.42px;transform:scaleX(1.059);transform-origin:0 0;-webkit-text-stroke:.3px #eeff55;">SHIFT ENTERED</div>
<div class="a" style="left:1029.1px;top:391.1px;width:31.700000000000045px;height:19.399999999999977px;background:#e6e3f5;border-radius:4px"></div>
<div class="t " style="left:1034.9px;top:395.6px;font-size:12.2px;color:#2e1a6e;transform:scaleX(0.843);transform-origin:0 0;-webkit-text-stroke:.2px #2e1a6e;">1:31</div>
<svg class="a" style="left:1071.1px;top:394px;" width="11" height="15" viewBox="0 0 11 15" fill="none"><path d="M8.3 3.6C7.6 2.6 6.5 2.2 5.3 2.2c-1.7 0-3 .9-3 2.2 0 3.2 6.3 1.9 6.3 5.3 0 1.4-1.4 2.4-3.2 2.4-1.4 0-2.7-.6-3.3-1.7M5.3 0.3v14" stroke="#1a1a1a" stroke-width="1.3"/></svg>
<div class="a" style="left:512.3px;top:528px;width:579.8px;height:70.70000000000005px;background:#fff;border-radius:6px;box-shadow:0 1px 2px rgba(40,30,90,.07)"></div>
<div class="a" style="left:517.3px;top:533px;width:19.799999999999955px;height:19.799999999999955px;border:1.6px solid #3b2a7a;border-radius:4px;box-shadow:0 1px 2px rgba(0,0,0,.1)"></div>
<div class="t " style="left:547.5px;top:538.0px;font-size:12.1px;color:#111;letter-spacing:0.15px;transform:scaleX(1.113);transform-origin:0 0;-webkit-text-stroke:.35px #111;">06:00 - 13:00 | AM</div>
<div class="a" style="left:517.3px;top:561.8px;width:31.600000000000023px;height:31.600000000000023px;background:#ebe8f1;border-radius:50%"></div>
<svg class="a" style="left:523.8px;top:568.5px;" width="19" height="19" viewBox="0 0 19 19" fill="none"><circle cx="8" cy="8" r="6.5" stroke="#2e1a6e" stroke-width="1.7"/><path d="M12.6 12.6l4 4" stroke="#2e1a6e" stroke-width="1.8"/></svg>
<div class="t " style="left:562.9px;top:573.9px;font-size:11.45px;color:#111;letter-spacing:0.40px;transform:scaleX(1.052);transform-origin:0 0;-webkit-text-stroke:.3px #111;">DRIVER+LABOURER</div>
<div class="a" style="left:974.3px;top:533px;width:112.79999999999995px;height:19.799999999999955px;background:#33cc00;border-radius:4px;"></div>
<div class="t " style="left:980.6px;top:537.7px;font-size:11.6px;color:#6a6a6a;letter-spacing:0.40px;transform:scaleX(1.057);transform-origin:0 0;-webkit-text-stroke:.3px #6a6a6a;">SHIFT RELEASE</div>
<div class="a" style="left:1022.0999999999999px;top:574.1px;width:38.700000000000045px;height:19.399999999999977px;background:#e6e3f5;border-radius:4px"></div>
<div class="t " style="left:1025.7px;top:578.6px;font-size:12.2px;color:#2e1a6e;transform:scaleX(1.031);transform-origin:0 0;-webkit-text-stroke:.2px #2e1a6e;">13:43</div>
<svg class="a" style="left:1071.1px;top:577px;" width="11" height="15" viewBox="0 0 11 15" fill="none"><path d="M8.3 3.6C7.6 2.6 6.5 2.2 5.3 2.2c-1.7 0-3 .9-3 2.2 0 3.2 6.3 1.9 6.3 5.3 0 1.4-1.4 2.4-3.2 2.4-1.4 0-2.7-.6-3.3-1.7M5.3 0.3v14" stroke="#1a1a1a" stroke-width="1.3"/></svg>
<div class="a" style="left:512.3px;top:610px;width:579.8px;height:70.70000000000005px;background:#fff;border-radius:6px;box-shadow:0 1px 2px rgba(40,30,90,.07)"></div>
<div class="a" style="left:517.3px;top:615px;width:19.799999999999955px;height:19.799999999999955px;border:1.6px solid #3b2a7a;border-radius:4px;box-shadow:0 1px 2px rgba(0,0,0,.1)"></div>
<div class="t " style="left:547.5px;top:620.0px;font-size:12.1px;color:#111;letter-spacing:0.13px;transform:scaleX(1.100);transform-origin:0 0;-webkit-text-stroke:.35px #111;">14:00 - 20:00 | PM</div>
<div class="a" style="left:517.3px;top:643.8px;width:31.600000000000023px;height:31.600000000000023px;background:#ebe8f1;border-radius:50%"></div>
<svg class="a" style="left:523.8px;top:650.5px;" width="19" height="19" viewBox="0 0 19 19" fill="none"><circle cx="8" cy="8" r="6.5" stroke="#2e1a6e" stroke-width="1.7"/><path d="M12.6 12.6l4 4" stroke="#2e1a6e" stroke-width="1.8"/></svg>
<div class="t " style="left:562.9px;top:655.9px;font-size:11.45px;color:#111;letter-spacing:0.40px;transform:scaleX(1.052);transform-origin:0 0;-webkit-text-stroke:.3px #111;">DRIVER+LABOURER</div>
<div class="a" style="left:974.3px;top:615px;width:112.79999999999995px;height:19.799999999999955px;background:#33cc00;border-radius:4px;"></div>
<div class="t " style="left:980.6px;top:619.7px;font-size:11.6px;color:#6a6a6a;letter-spacing:0.40px;transform:scaleX(1.057);transform-origin:0 0;-webkit-text-stroke:.3px #6a6a6a;">SHIFT RELEASE</div>
<div class="a" style="left:1022.0999999999999px;top:656.1px;width:38.700000000000045px;height:19.399999999999977px;background:#e6e3f5;border-radius:4px"></div>
<div class="t " style="left:1025.7px;top:660.6px;font-size:12.2px;color:#2e1a6e;transform:scaleX(1.031);transform-origin:0 0;-webkit-text-stroke:.2px #2e1a6e;">13:43</div>
<svg class="a" style="left:1071.1px;top:659px;" width="11" height="15" viewBox="0 0 11 15" fill="none"><path d="M8.3 3.6C7.6 2.6 6.5 2.2 5.3 2.2c-1.7 0-3 .9-3 2.2 0 3.2 6.3 1.9 6.3 5.3 0 1.4-1.4 2.4-3.2 2.4-1.4 0-2.7-.6-3.3-1.7M5.3 0.3v14" stroke="#1a1a1a" stroke-width="1.3"/></svg>
<div class="a" style="left:512.3px;top:692px;width:579.8px;height:70.70000000000005px;background:#fff;border-radius:6px;box-shadow:0 1px 2px rgba(40,30,90,.07)"></div>
<div class="a" style="left:517.3px;top:697px;width:19.799999999999955px;height:19.799999999999955px;border:1.6px solid #3b2a7a;border-radius:4px;box-shadow:0 1px 2px rgba(0,0,0,.1)"></div>
<div class="t " style="left:547.5px;top:702.0px;font-size:12.1px;color:#111;letter-spacing:0.16px;transform:scaleX(1.121);transform-origin:0 0;-webkit-text-stroke:.35px #111;">23:00 - 05:00 | NS</div>
<div class="a" style="left:517.3px;top:725.8px;width:31.600000000000023px;height:31.600000000000023px;background:#ebe8f1;border-radius:50%"></div>
<svg class="a" style="left:523.8px;top:732.5px;" width="19" height="19" viewBox="0 0 19 19" fill="none"><circle cx="8" cy="8" r="6.5" stroke="#2e1a6e" stroke-width="1.7"/><path d="M12.6 12.6l4 4" stroke="#2e1a6e" stroke-width="1.8"/></svg>
<div class="t " style="left:562.9px;top:737.9px;font-size:11.45px;color:#111;letter-spacing:0.40px;transform:scaleX(1.052);transform-origin:0 0;-webkit-text-stroke:.3px #111;">DRIVER+LABOURER</div>
<div class="a" style="left:1112.1px;top:345px;width:579.7px;height:70.69999999999999px;background:#fff;border-radius:6px;box-shadow:0 1px 2px rgba(40,30,90,.07)"></div>
<div class="a" style="left:1117.1px;top:350px;width:19.799999999999955px;height:19.80000000000001px;border:1.6px solid #3b2a7a;border-radius:4px;box-shadow:0 1px 2px rgba(0,0,0,.1)"></div>
<div class="t " style="left:1147.3px;top:355.0px;font-size:12.1px;color:#111;letter-spacing:0.15px;transform:scaleX(1.118);transform-origin:0 0;-webkit-text-stroke:.35px #111;">06:00 - 14:00 | AM</div>
<div class="a" style="left:1117.1px;top:378.8px;width:31.59999999999991px;height:31.599999999999966px;background:#ebe8f1;border-radius:50%"></div>
<svg class="a" style="left:1123.6px;top:385.5px;" width="19" height="19" viewBox="0 0 19 19" fill="none"><circle cx="7" cy="5.6" r="3.1" stroke="#2e1a6e" stroke-width="1.7"/><path d="M1.6 17v-1.6a3.6 3.6 0 0 1 3.6-3.6h3.6a3.6 3.6 0 0 1 3.6 3.6V17M11.8 2.4a3.2 3.2 0 0 1 0 6.4M15.2 11.9a3.5 3.5 0 0 1 2.5 3.4V17" stroke="#2e1a6e" stroke-width="1.7" stroke-linecap="round"/></svg>
<div class="t " style="left:1162.5px;top:382.0px;font-size:11.4px;color:#3a3a3a;letter-spacing:0.38px;transform:scaleX(1.055);transform-origin:0 0;">MATTHEW MOORE,DRAKE SAVAGE,MATHEW WADE,COR...</div>
<div class="t " style="left:1162.5px;top:396.8px;font-size:11.4px;color:#3a3a3a;letter-spacing:0.40px;transform:scaleX(1.055);transform-origin:0 0;">GARDENER+ACCMNGR+ACCOUNTANT+ADMNOFFICR+...</div>
<div class="a" style="left:1532.1px;top:350px;width:154.70000000000005px;height:19.80000000000001px;background:#e6e3f5;border-radius:4px;"></div>
<div class="t " style="left:1538.7px;top:354.7px;font-size:11.6px;color:#2e1a6e;letter-spacing:0.48px;transform:scaleX(1.060);transform-origin:0 0;-webkit-text-stroke:.3px #2e1a6e;">MEMBER BROADCAST</div>
<div class="a" style="left:1628.7px;top:391.1px;width:31.799999999999955px;height:19.399999999999977px;background:#e6e3f5;border-radius:4px"></div>
<div class="t " style="left:1633.2px;top:395.6px;font-size:12.2px;color:#2e1a6e;transform:scaleX(0.961);transform-origin:0 0;-webkit-text-stroke:.2px #2e1a6e;">2:31</div>
<svg class="a" style="left:1670.8px;top:394px;" width="11" height="15" viewBox="0 0 11 15" fill="none"><path d="M8.3 3.6C7.6 2.6 6.5 2.2 5.3 2.2c-1.7 0-3 .9-3 2.2 0 3.2 6.3 1.9 6.3 5.3 0 1.4-1.4 2.4-3.2 2.4-1.4 0-2.7-.6-3.3-1.7M5.3 0.3v14" stroke="#1a1a1a" stroke-width="1.3"/></svg>
<div class="a" style="left:1112.1px;top:528px;width:579.7px;height:70.70000000000005px;background:#fff;border-radius:6px;box-shadow:0 1px 2px rgba(40,30,90,.07)"></div>
<div class="a" style="left:1117.1px;top:533px;width:19.799999999999955px;height:19.799999999999955px;border:1.6px solid #3b2a7a;border-radius:4px;box-shadow:0 1px 2px rgba(0,0,0,.1)"></div>
<div class="t " style="left:1147.3px;top:538.0px;font-size:12.1px;color:#111;letter-spacing:0.15px;transform:scaleX(1.113);transform-origin:0 0;-webkit-text-stroke:.35px #111;">06:00 - 13:00 | AM</div>
<div class="a" style="left:1117.1px;top:561.8px;width:31.59999999999991px;height:31.600000000000023px;background:#ebe8f1;border-radius:50%"></div>
<svg class="a" style="left:1123.6px;top:568.5px;" width="19" height="19" viewBox="0 0 19 19" fill="none"><circle cx="8" cy="8" r="6.5" stroke="#2e1a6e" stroke-width="1.7"/><path d="M12.6 12.6l4 4" stroke="#2e1a6e" stroke-width="1.8"/></svg>
<div class="t " style="left:1162.7px;top:573.9px;font-size:11.45px;color:#111;letter-spacing:0.40px;transform:scaleX(1.052);transform-origin:0 0;-webkit-text-stroke:.3px #111;">DRIVER+LABOURER</div>
<div class="a" style="left:1536.8999999999999px;top:533px;width:149.9000000000001px;height:19.799999999999955px;background:#e6e3f5;border-radius:4px;"></div>
<div class="t " style="left:1543.5px;top:537.7px;font-size:11.6px;color:#2e1a6e;letter-spacing:0.60px;transform:scaleX(1.082);transform-origin:0 0;-webkit-text-stroke:.3px #2e1a6e;">CLIENT WITHDRAWN</div>
<div class="a" style="left:1620.7px;top:574.1px;width:39.799999999999955px;height:19.399999999999977px;background:#e6e3f5;border-radius:4px"></div>
<div class="t " style="left:1624.4px;top:578.6px;font-size:12.2px;color:#2e1a6e;transform:scaleX(1.063);transform-origin:0 0;-webkit-text-stroke:.2px #2e1a6e;">14:43</div>
<svg class="a" style="left:1670.8px;top:577px;" width="11" height="15" viewBox="0 0 11 15" fill="none"><path d="M8.3 3.6C7.6 2.6 6.5 2.2 5.3 2.2c-1.7 0-3 .9-3 2.2 0 3.2 6.3 1.9 6.3 5.3 0 1.4-1.4 2.4-3.2 2.4-1.4 0-2.7-.6-3.3-1.7M5.3 0.3v14" stroke="#1a1a1a" stroke-width="1.3"/></svg>
<div class="a" style="left:1112.1px;top:610px;width:579.7px;height:70.70000000000005px;background:#fff;border-radius:6px;box-shadow:0 1px 2px rgba(40,30,90,.07)"></div>
<div class="a" style="left:1117.1px;top:615px;width:19.799999999999955px;height:19.799999999999955px;border:1.6px solid #3b2a7a;border-radius:4px;box-shadow:0 1px 2px rgba(0,0,0,.1)"></div>
<div class="t " style="left:1147.3px;top:620.0px;font-size:12.1px;color:#111;letter-spacing:0.13px;transform:scaleX(1.100);transform-origin:0 0;-webkit-text-stroke:.35px #111;">14:00 - 20:00 | PM</div>
<div class="a" style="left:1117.1px;top:643.8px;width:31.59999999999991px;height:31.600000000000023px;background:#ebe8f1;border-radius:50%"></div>
<svg class="a" style="left:1123.6px;top:650.5px;" width="19" height="19" viewBox="0 0 19 19" fill="none"><circle cx="8" cy="8" r="6.5" stroke="#2e1a6e" stroke-width="1.7"/><path d="M12.6 12.6l4 4" stroke="#2e1a6e" stroke-width="1.8"/></svg>
<div class="t " style="left:1162.7px;top:655.9px;font-size:11.45px;color:#111;letter-spacing:0.40px;transform:scaleX(1.052);transform-origin:0 0;-webkit-text-stroke:.3px #111;">DRIVER+LABOURER</div>
<div class="a" style="left:1536.8999999999999px;top:615px;width:149.9000000000001px;height:19.799999999999955px;background:#e6e3f5;border-radius:4px;"></div>
<div class="t " style="left:1543.5px;top:619.7px;font-size:11.6px;color:#2e1a6e;letter-spacing:0.60px;transform:scaleX(1.082);transform-origin:0 0;-webkit-text-stroke:.3px #2e1a6e;">CLIENT WITHDRAWN</div>
<div class="a" style="left:1620.7px;top:656.1px;width:39.799999999999955px;height:19.399999999999977px;background:#e6e3f5;border-radius:4px"></div>
<div class="t " style="left:1624.4px;top:660.6px;font-size:12.2px;color:#2e1a6e;transform:scaleX(1.063);transform-origin:0 0;-webkit-text-stroke:.2px #2e1a6e;">14:43</div>
<svg class="a" style="left:1670.8px;top:659px;" width="11" height="15" viewBox="0 0 11 15" fill="none"><path d="M8.3 3.6C7.6 2.6 6.5 2.2 5.3 2.2c-1.7 0-3 .9-3 2.2 0 3.2 6.3 1.9 6.3 5.3 0 1.4-1.4 2.4-3.2 2.4-1.4 0-2.7-.6-3.3-1.7M5.3 0.3v14" stroke="#1a1a1a" stroke-width="1.3"/></svg>
<div class="a" style="left:1112.1px;top:692px;width:579.7px;height:70.70000000000005px;background:#fff;border-radius:6px;box-shadow:0 1px 2px rgba(40,30,90,.07)"></div>
<div class="a" style="left:1117.1px;top:697px;width:19.799999999999955px;height:19.799999999999955px;border:1.6px solid #3b2a7a;border-radius:4px;box-shadow:0 1px 2px rgba(0,0,0,.1)"></div>
<div class="t " style="left:1147.3px;top:702.0px;font-size:12.1px;color:#111;letter-spacing:0.16px;transform:scaleX(1.121);transform-origin:0 0;-webkit-text-stroke:.35px #111;">23:00 - 05:00 | NS</div>
<div class="a" style="left:1117.1px;top:725.8px;width:31.59999999999991px;height:31.600000000000023px;background:#ebe8f1;border-radius:50%"></div>
<svg class="a" style="left:1123.6px;top:732.5px;" width="19" height="19" viewBox="0 0 19 19" fill="none"><circle cx="8" cy="8" r="6.5" stroke="#2e1a6e" stroke-width="1.7"/><path d="M12.6 12.6l4 4" stroke="#2e1a6e" stroke-width="1.8"/></svg>
<div class="t " style="left:1162.7px;top:737.9px;font-size:11.45px;color:#111;letter-spacing:0.40px;transform:scaleX(1.052);transform-origin:0 0;-webkit-text-stroke:.3px #111;">DRIVER+LABOURER</div>
<div class="a" style="left:1703px;top:337.7px;width:82.8px;height:432.3px;overflow:hidden"><div class="a" style="left:-1703px;top:-337.7px;width:1859px;height:873px">
<div class="a" style="left:1712px;top:345px;width:580px;height:70.69999999999999px;background:#fff;border-radius:6px;box-shadow:0 1px 2px rgba(40,30,90,.07)"></div>
<div class="a" style="left:1717px;top:350px;width:19.799999999999955px;height:19.80000000000001px;border:1.6px solid #3b2a7a;border-radius:4px;box-shadow:0 1px 2px rgba(0,0,0,.1)"></div>
<div class="t " style="left:1747.2px;top:355.0px;font-size:12.1px;color:#111;letter-spacing:0.25px;transform:scaleX(1.155);transform-origin:0 0;-webkit-text-stroke:.35px #111;">06:00</div>
<div class="a" style="left:1717px;top:378.8px;width:31.59999999999991px;height:31.599999999999966px;background:#ebe8f1;border-radius:50%"></div>
<svg class="a" style="left:1723.5px;top:385.5px;" width="19" height="19" viewBox="0 0 19 19" fill="none"><circle cx="8" cy="8" r="6.5" stroke="#2e1a6e" stroke-width="1.7"/><path d="M12.6 12.6l4 4" stroke="#2e1a6e" stroke-width="1.8"/></svg>
<div class="t " style="left:1762.6px;top:390.9px;font-size:11.45px;color:#111;letter-spacing:0.38px;transform:scaleX(1.053);transform-origin:0 0;-webkit-text-stroke:.3px #111;">ACCMNGR+GARDENER+ACCOUNTANT+ADMNOFFICR+CHILDC...</div>
<div class="a" style="left:1712px;top:427.5px;width:580px;height:70.69999999999999px;background:#fff;border-radius:6px;box-shadow:0 1px 2px rgba(40,30,90,.07)"></div>
<div class="a" style="left:1717px;top:432.5px;width:19.799999999999955px;height:19.80000000000001px;border:1.6px solid #3b2a7a;border-radius:4px;box-shadow:0 1px 2px rgba(0,0,0,.1)"></div>
<div class="t " style="left:1747.2px;top:437.5px;font-size:12.1px;color:#111;letter-spacing:0.25px;transform:scaleX(1.155);transform-origin:0 0;-webkit-text-stroke:.35px #111;">06:00</div>
<div class="a" style="left:1717px;top:461.3px;width:31.59999999999991px;height:31.599999999999966px;background:#ebe8f1;border-radius:50%"></div>
<svg class="a" style="left:1723.5px;top:468.0px;" width="19" height="19" viewBox="0 0 19 19" fill="none"><circle cx="8" cy="8" r="6.5" stroke="#2e1a6e" stroke-width="1.7"/><path d="M12.6 12.6l4 4" stroke="#2e1a6e" stroke-width="1.8"/></svg>
<div class="t " style="left:1762.6px;top:473.4px;font-size:11.45px;color:#111;letter-spacing:0.38px;transform:scaleX(1.053);transform-origin:0 0;-webkit-text-stroke:.3px #111;">ACCMNGR+GARDENER+ACCOUNTANT+ADMNOFFICR+CHILDC...</div>
<div class="a" style="left:1712px;top:528px;width:580px;height:70.70000000000005px;background:#fff;border-radius:6px;box-shadow:0 1px 2px rgba(40,30,90,.07)"></div>
<div class="a" style="left:1717px;top:533px;width:19.799999999999955px;height:19.799999999999955px;border:1.6px solid #3b2a7a;border-radius:4px;box-shadow:0 1px 2px rgba(0,0,0,.1)"></div>
<div class="t " style="left:1747.2px;top:538.0px;font-size:12.1px;color:#111;letter-spacing:0.25px;transform:scaleX(1.155);transform-origin:0 0;-webkit-text-stroke:.35px #111;">06:00</div>
<div class="a" style="left:1717px;top:561.8px;width:31.59999999999991px;height:31.600000000000023px;background:#ebe8f1;border-radius:50%"></div>
<svg class="a" style="left:1723.5px;top:568.5px;" width="19" height="19" viewBox="0 0 19 19" fill="none"><circle cx="8" cy="8" r="6.5" stroke="#2e1a6e" stroke-width="1.7"/><path d="M12.6 12.6l4 4" stroke="#2e1a6e" stroke-width="1.8"/></svg>
<div class="t " style="left:1762.6px;top:573.9px;font-size:11.45px;color:#111;letter-spacing:0.40px;transform:scaleX(1.052);transform-origin:0 0;-webkit-text-stroke:.3px #111;">DRIVER+LABOURER</div>
<div class="a" style="left:1712px;top:610px;width:580px;height:70.70000000000005px;background:#fff;border-radius:6px;box-shadow:0 1px 2px rgba(40,30,90,.07)"></div>
<div class="a" style="left:1717px;top:615px;width:19.799999999999955px;height:19.799999999999955px;border:1.6px solid #3b2a7a;border-radius:4px;box-shadow:0 1px 2px rgba(0,0,0,.1)"></div>
<div class="t " style="left:1747.2px;top:620.0px;font-size:12.1px;color:#111;letter-spacing:0.25px;transform:scaleX(1.155);transform-origin:0 0;-webkit-text-stroke:.35px #111;">14:00</div>
<div class="a" style="left:1717px;top:643.8px;width:31.59999999999991px;height:31.600000000000023px;background:#ebe8f1;border-radius:50%"></div>
<svg class="a" style="left:1723.5px;top:650.5px;" width="19" height="19" viewBox="0 0 19 19" fill="none"><circle cx="8" cy="8" r="6.5" stroke="#2e1a6e" stroke-width="1.7"/><path d="M12.6 12.6l4 4" stroke="#2e1a6e" stroke-width="1.8"/></svg>
<div class="t " style="left:1762.6px;top:655.9px;font-size:11.45px;color:#111;letter-spacing:0.40px;transform:scaleX(1.052);transform-origin:0 0;-webkit-text-stroke:.3px #111;">DRIVER+LABOURER</div>
<div class="a" style="left:1712px;top:692px;width:580px;height:70.70000000000005px;background:#fff;border-radius:6px;box-shadow:0 1px 2px rgba(40,30,90,.07)"></div>
<div class="a" style="left:1717px;top:697px;width:19.799999999999955px;height:19.799999999999955px;border:1.6px solid #3b2a7a;border-radius:4px;box-shadow:0 1px 2px rgba(0,0,0,.1)"></div>
<div class="t " style="left:1747.2px;top:702.0px;font-size:12.1px;color:#111;letter-spacing:0.25px;transform:scaleX(1.155);transform-origin:0 0;-webkit-text-stroke:.35px #111;">23:00</div>
<div class="a" style="left:1717px;top:725.8px;width:31.59999999999991px;height:31.600000000000023px;background:#ebe8f1;border-radius:50%"></div>
<svg class="a" style="left:1723.5px;top:732.5px;" width="19" height="19" viewBox="0 0 19 19" fill="none"><circle cx="8" cy="8" r="6.5" stroke="#2e1a6e" stroke-width="1.7"/><path d="M12.6 12.6l4 4" stroke="#2e1a6e" stroke-width="1.8"/></svg>
<div class="t " style="left:1762.6px;top:737.9px;font-size:11.45px;color:#111;letter-spacing:0.40px;transform:scaleX(1.052);transform-origin:0 0;-webkit-text-stroke:.3px #111;">DRIVER+LABOURER</div>
</div></div>
<div class="a" style="left:1785.8px;top:302px;width:17.5px;height:468px;background:#f5f5f5"></div>
<svg class="a" style="left:1790px;top:346px;" width="10" height="8" viewBox="0 0 10 8" fill="none"><path d="M0.5 7.5h9L5 0.5z" fill="#8a8a8a"/></svg>
<div class="a" style="left:1789px;top:361px;width:11px;height:70px;background:#8c8c8c;border-radius:6px"></div>
<svg class="a" style="left:1790px;top:753.5px;" width="10" height="8" viewBox="0 0 10 8" fill="none"><path d="M0.5 0.5h9L5 7.5z" fill="#8a8a8a"/></svg>
<div class="a" style="left:323px;top:768.8px;width:179.5px;height:19.0px;background:#f6f6f6"></div>
<div class="a" style="left:502.5px;top:768.8px;width:1300.8px;height:19.0px;background:#fafafa"></div>
<svg class="a" style="left:510.5px;top:773.5px;" width="8" height="10" viewBox="0 0 8 10" fill="none"><path d="M7.5 0.5v9L0.5 5z" fill="#8a8a8a"/></svg>
<div class="a" style="left:526px;top:773.3px;width:85px;height:10.300000000000068px;background:#8c8c8c;border-radius:6px"></div>
<svg class="a" style="left:1769.5px;top:773.5px;" width="8" height="10" viewBox="0 0 8 10" fill="none"><path d="M0.5 0.5v9L7.5 5z" fill="#8a8a8a"/></svg>
<div class="a" style="left:621px;top:253px;width:211px;height:49.69999999999999px;border:6px solid #7eae53"></div>
<div class="a" style="left:0px;top:827px;width:1858px;height:46px;background:#fff"></div>
<div class="a" style="left:0px;top:832px;width:1857px;height:40px;background:#e8e6f3;border-bottom-left-radius:8px;border-bottom-right-radius:8px"></div>
<div class="t " style="left:18.8px;top:845.3px;font-size:15.2px;color:#555;letter-spacing:0.01px;">App Users</div>
<div class="t " style="left:110.8px;top:845.3px;font-size:15.2px;color:#555;letter-spacing:-0.10px;transform:scaleX(0.989);transform-origin:0 0;">Case Notes</div>
<div class="t " style="left:209.1px;top:845.3px;font-size:15.2px;color:#555;letter-spacing:0.16px;transform:scaleX(1.019);transform-origin:0 0;">Contact Log</div>
<div class="t " style="left:315.3px;top:845.3px;font-size:15.2px;color:#555;letter-spacing:0.12px;transform:scaleX(1.014);transform-origin:0 0;">Contact Member</div>
<div class="t " style="left:451.4px;top:845.3px;font-size:15.2px;color:#555;letter-spacing:0.09px;transform:scaleX(1.011);transform-origin:0 0;">Daily Bookings</div>
<div class="t " style="left:575.0px;top:845.3px;font-size:15.2px;color:#555;letter-spacing:0.12px;transform:scaleX(1.015);transform-origin:0 0;">Download Bookings</div>
<div class="t " style="left:733.3px;top:845.3px;font-size:15.2px;color:#555;letter-spacing:0.11px;transform:scaleX(1.015);transform-origin:0 0;">Infections</div>
<div class="t " style="left:821.2px;top:845.3px;font-size:15.2px;color:#555;letter-spacing:-0.08px;transform:scaleX(0.990);transform-origin:0 0;">Talent Search</div>
<div class="t " style="left:933.2px;top:845.3px;font-size:15.2px;color:#555;letter-spacing:-0.27px;transform:scaleX(0.974);transform-origin:0 0;">Users</div>
<div class="a" style="left:97.3px;top:845px;width:1.2000000000000028px;height:16px;background:#888"></div>
<div class="a" style="left:196.1px;top:845px;width:1.1999999999999886px;height:16px;background:#888"></div>
<div class="a" style="left:302.0px;top:845px;width:1.1999999999999886px;height:16px;background:#888"></div>
<div class="a" style="left:437.9px;top:845px;width:1.1999999999999886px;height:16px;background:#888"></div>
<div class="a" style="left:561.9px;top:845px;width:1.2000000000000455px;height:16px;background:#888"></div>
<div class="a" style="left:724.6px;top:845px;width:1.2000000000000455px;height:16px;background:#888"></div>
<div class="a" style="left:812.1px;top:845px;width:1.2000000000000455px;height:16px;background:#888"></div>
<div class="a" style="left:920.2px;top:845px;width:1.2000000000000455px;height:16px;background:#888"></div>
<div class="a" style="left:979.1px;top:845px;width:1.2000000000000455px;height:16px;background:#888"></div>
<div class="t " style="left:989.8px;top:845.1px;font-size:15.2px;color:#444;letter-spacing:0.05px;transform:scaleX(1.006);transform-origin:0 0;-webkit-text-stroke:.35px #444;">More Links</div>
<svg class="a" style="left:1072.5px;top:849px;" width="10" height="7" viewBox="0 0 10 7" fill="none"><path d="M0.5 6.5h9L5 0.5z" fill="#333"/></svg>
<div class="t " style="left:1622.3px;top:845.3px;font-size:14.5px;color:#555;letter-spacing:0.23px;transform:scaleX(1.028);transform-origin:0 0;">Powered by</div>
<svg class="a" style="left:1709px;top:839px;" width="26" height="26" viewBox="0 0 26 26" fill="none"><circle cx="13.5" cy="3.8" r="2.8" fill="#f7941d"/><path d="M4.5 8.5l13 14" stroke="#8a4fb5" stroke-width="5" stroke-linecap="round"/><path d="M18.5 8l-14 15" stroke="#e8252a" stroke-width="5" stroke-linecap="round"/><path d="M4.5 8.5l6 6.5" stroke="#d62d8e" stroke-width="5" stroke-linecap="round"/><path d="M18.5 8l-4.5 5" stroke="#f5b02a" stroke-width="5" stroke-linecap="round"/></svg>
<div class="t " style="left:1729.0px;top:844.8px;font-size:15.5px;color:#4f4f4f;letter-spacing:-0.45px;transform:scaleX(0.900);transform-origin:0 0;-webkit-text-stroke:.45px #4f4f4f;">eople</div>
<div class="a" style="left:1772px;top:842.5px;width:1.2999999999999545px;height:18.799999999999955px;background:#888"></div>
<svg class="a" style="left:1782px;top:843px;" width="18" height="18" viewBox="0 0 18 18" fill="none"><circle cx="9" cy="9" r="7.8" stroke="#2e1a6e" stroke-width="1.6"/><circle cx="9" cy="7" r="2.6" stroke="#2e1a6e" stroke-width="1.5"/><path d="M3.8 14.5c1.3-1.7 3-2.5 5.2-2.5s3.9.8 5.2 2.5" stroke="#2e1a6e" stroke-width="1.5"/></svg>
<div class="a" style="left:1808.8px;top:842.5px;width:1.2999999999999545px;height:18.799999999999955px;background:#888"></div>
<svg class="a" style="left:1819px;top:843px;" width="18" height="18" viewBox="0 0 18 18" fill="none"><path d="M15.5 5.2A7.8 7.8 0 1 0 16.8 9" stroke="#2e1a6e" stroke-width="1.6" stroke-linecap="round"/><path d="M5.8 8.5l3 3 7.5-8" stroke="#2e1a6e" stroke-width="1.6" stroke-linecap="round" stroke-linejoin="round"/></svg>
</body></html>
